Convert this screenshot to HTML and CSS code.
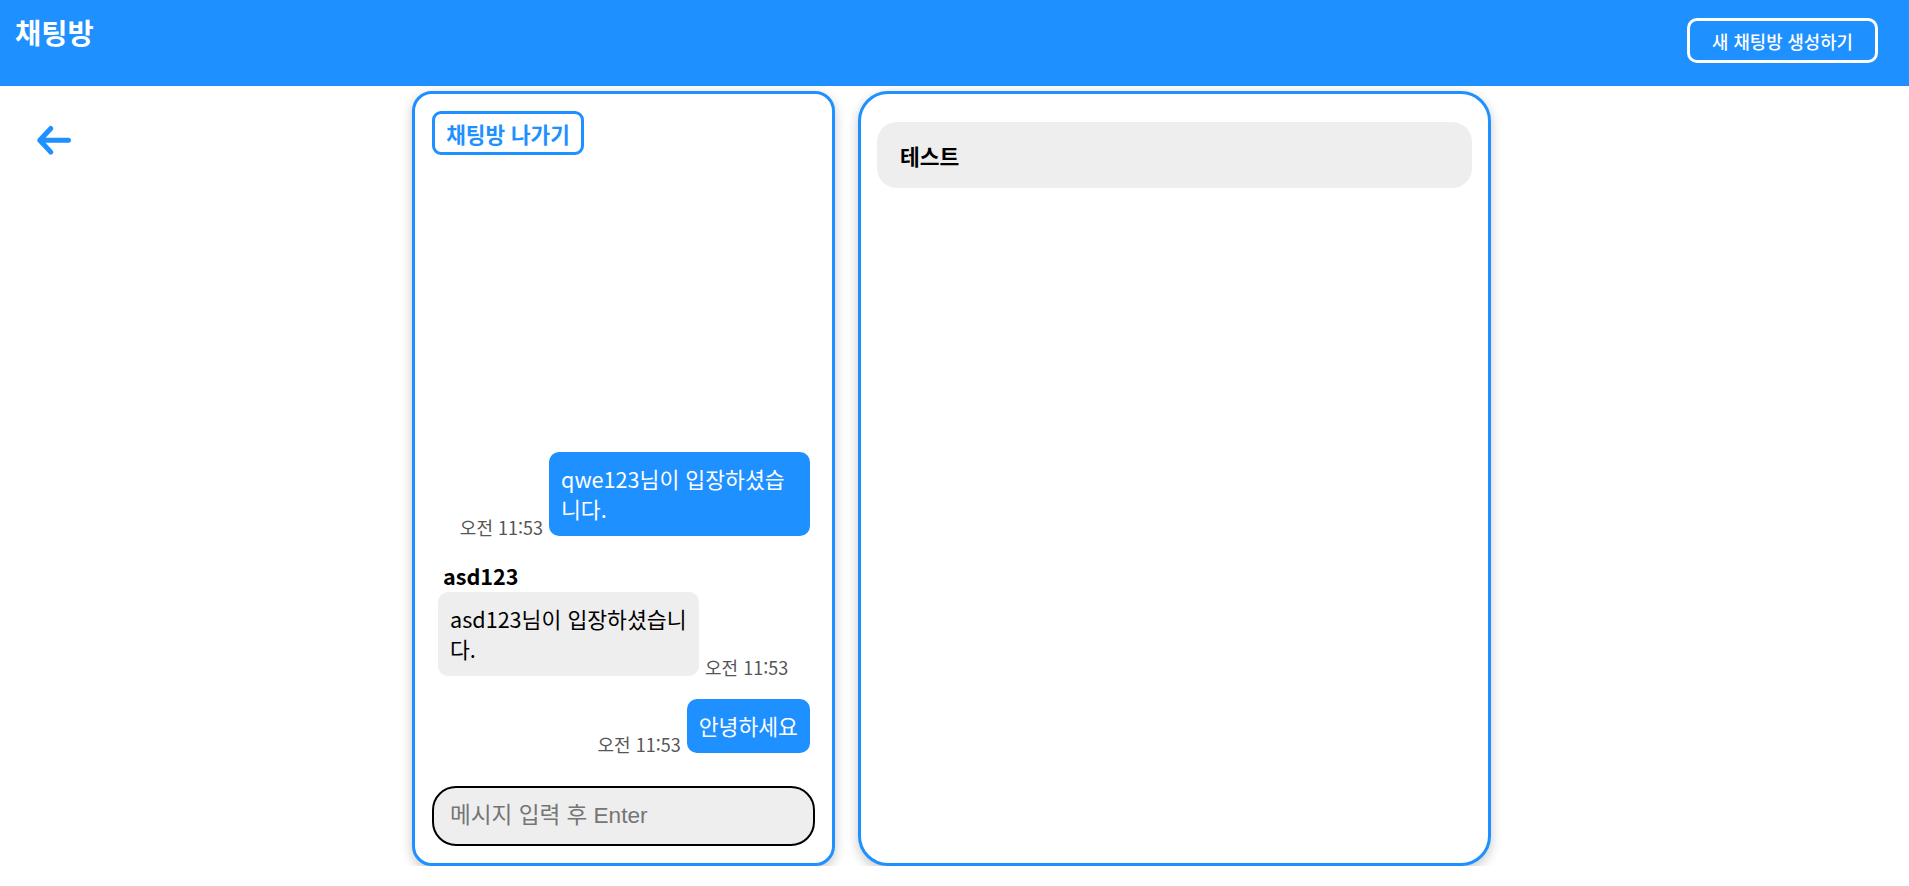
FILE: index.html
```html
<!DOCTYPE html>
<html lang="ko">
<head>
<meta charset="utf-8">
<title>채팅방</title>
<link rel="stylesheet" href="styles.css">
</head>
<body>
<header class="topbar">
  <h1 class="brand">채팅방</h1>
  <button class="new-room" type="button">새 채팅방 생성하기</button>
</header>
<main class="layout">
  <div class="nav-col">
    <button class="back-btn" type="button" aria-label="뒤로">
      <svg class="back-icon" viewBox="0 0 48 40" width="48" height="40">
        <path d="M9.8 20.3H38.5M20.8 8.5L9.8 20.3L20.8 32.1" fill="none" stroke="#1e90ff" stroke-width="5" stroke-linecap="round" stroke-linejoin="round"/>
      </svg>
    </button>
  </div>
  <section class="chat-panel">
    <div class="chat-top">
      <button class="leave-btn" type="button">채팅방 나가기</button>
    </div>
    <div class="messages">
      <div class="msg-row mine">
        <span class="msg-time">오전 11:53</span>
        <div class="bubble bubble-mine">qwe123님이 입장하셨습니다.</div>
      </div>
      <div class="msg-row theirs">
        <div class="msg-name">asd123</div>
        <div class="msg-line">
          <div class="bubble bubble-theirs">asd123님이 입장하셨습니다.</div>
          <span class="msg-time">오전 11:53</span>
        </div>
      </div>
      <div class="msg-row mine">
        <span class="msg-time">오전 11:53</span>
        <div class="bubble bubble-mine">안녕하세요</div>
      </div>
    </div>
    <input class="msg-input" type="text" placeholder="메시지 입력 후 Enter" autofocus>
  </section>
  <section class="room-panel">
    <div class="room-item">테스트</div>
  </section>
</main>
</body>
</html>
```

FILE: styles.css
```css
* {
  box-sizing: border-box;
}

html, body {
  margin: 0;
  padding: 0;
  background: #ffffff;
}

body {
  font-family: "Noto Sans CJK KR", "Noto Sans", sans-serif;
  color: #000;
}

.topbar {
  height: 86px;
  background: #1e90ff;
  display: flex;
  justify-content: space-between;
  align-items: flex-start;
  padding: 0 31px 0 15px;
}

.brand {
  margin: 11px 0 0 0;
  font-size: 28.5px;
  font-weight: 700;
  color: #ffffff;
  line-height: 1.448;
}

.new-room {
  margin-top: 18px;
  height: 45px;
  width: 191px;
  padding: 0;
  background: transparent;
  border: 3px solid #ffffff;
  border-radius: 10px;
  color: #ffffff;
  font-family: "Noto Sans CJK KR", sans-serif;
  font-size: 17.8px;
  font-weight: 500;
  display: flex;
  align-items: center;
  justify-content: center;
}

.layout {
  display: flex;
  align-items: flex-start;
  padding-top: 5px;
}

.nav-col {
  width: 412px;
  flex: none;
  padding: 29px 0 0 30px;
}

.back-btn {
  display: block;
  padding: 0;
  margin: 0;
  border: 0;
  background: transparent;
  width: 48px;
  height: 40px;
}

.back-icon {
  display: block;
}

.chat-panel {
  width: 423px;
  height: 775px;
  flex: none;
  border: 3px solid #1e90ff;
  border-radius: 20px;
  box-shadow: 0 4px 12px rgba(0, 0, 0, 0.22);
  padding: 17px;
  display: flex;
  flex-direction: column;
  background: #fff;
}

.chat-top {
  display: flex;
}

.leave-btn {
  height: 44px;
  width: 152px;
  padding: 0;
  background: #fff;
  border: 3px solid #1e90ff;
  border-radius: 9px;
  color: #1e90ff;
  font-family: "Noto Sans CJK KR", sans-serif;
  font-size: 21.3px;
  font-weight: 700;
  display: flex;
  align-items: center;
  justify-content: center;
}

.messages {
  flex: 1;
  display: flex;
  flex-direction: column;
  justify-content: flex-end;
  padding: 0 5px 33px 6px;
}

.msg-row + .msg-row {
  margin-top: 23px;
}

.msg-row.mine {
  display: flex;
  justify-content: flex-end;
  align-items: flex-end;
  gap: 6px;
}

.msg-row.theirs {
  padding-top: 2px;
}

.msg-name {
  font-size: 21.6px;
  font-weight: 700;
  line-height: 29px;
  padding-left: 5px;
  margin-bottom: 2px;
}

.msg-line {
  display: flex;
  align-items: flex-end;
  gap: 6px;
}

.bubble {
  max-width: 261px;
  padding: 12px;
  border-radius: 10px;
  font-size: 21.6px;
  line-height: 30px;
  word-break: break-all;
}

.bubble-mine {
  background: #1e90ff;
  color: #ffffff;
}

.bubble-theirs {
  background: #eeeeee;
  color: #000000;
}

.msg-time {
  font-size: 18px;
  line-height: 1;
  color: #555555;
  white-space: nowrap;
}

.msg-input {
  width: 100%;
  height: 60px;
  border: 2px solid #000;
  border-radius: 24px;
  background: #eeeeee;
  padding: 0 16px;
  font-family: "Liberation Sans", "Noto Sans CJK KR", sans-serif;
  font-size: 22.6px;
  color: #000;
  outline: none;
}

.msg-input::placeholder {
  color: #757575;
}

.room-panel {
  margin-left: 23px;
  width: 633px;
  height: 775px;
  flex: none;
  border: 3px solid #1e90ff;
  border-radius: 30px;
  box-shadow: 0 4px 12px rgba(0, 0, 0, 0.22);
  padding: 28px 16px 16px;
  background: #fff;
}

.room-item {
  height: 66px;
  border-radius: 20px;
  background: #eeeeee;
  padding: 0 23px;
  display: flex;
  align-items: center;
  font-size: 21.5px;
  font-weight: 700;
}
```
